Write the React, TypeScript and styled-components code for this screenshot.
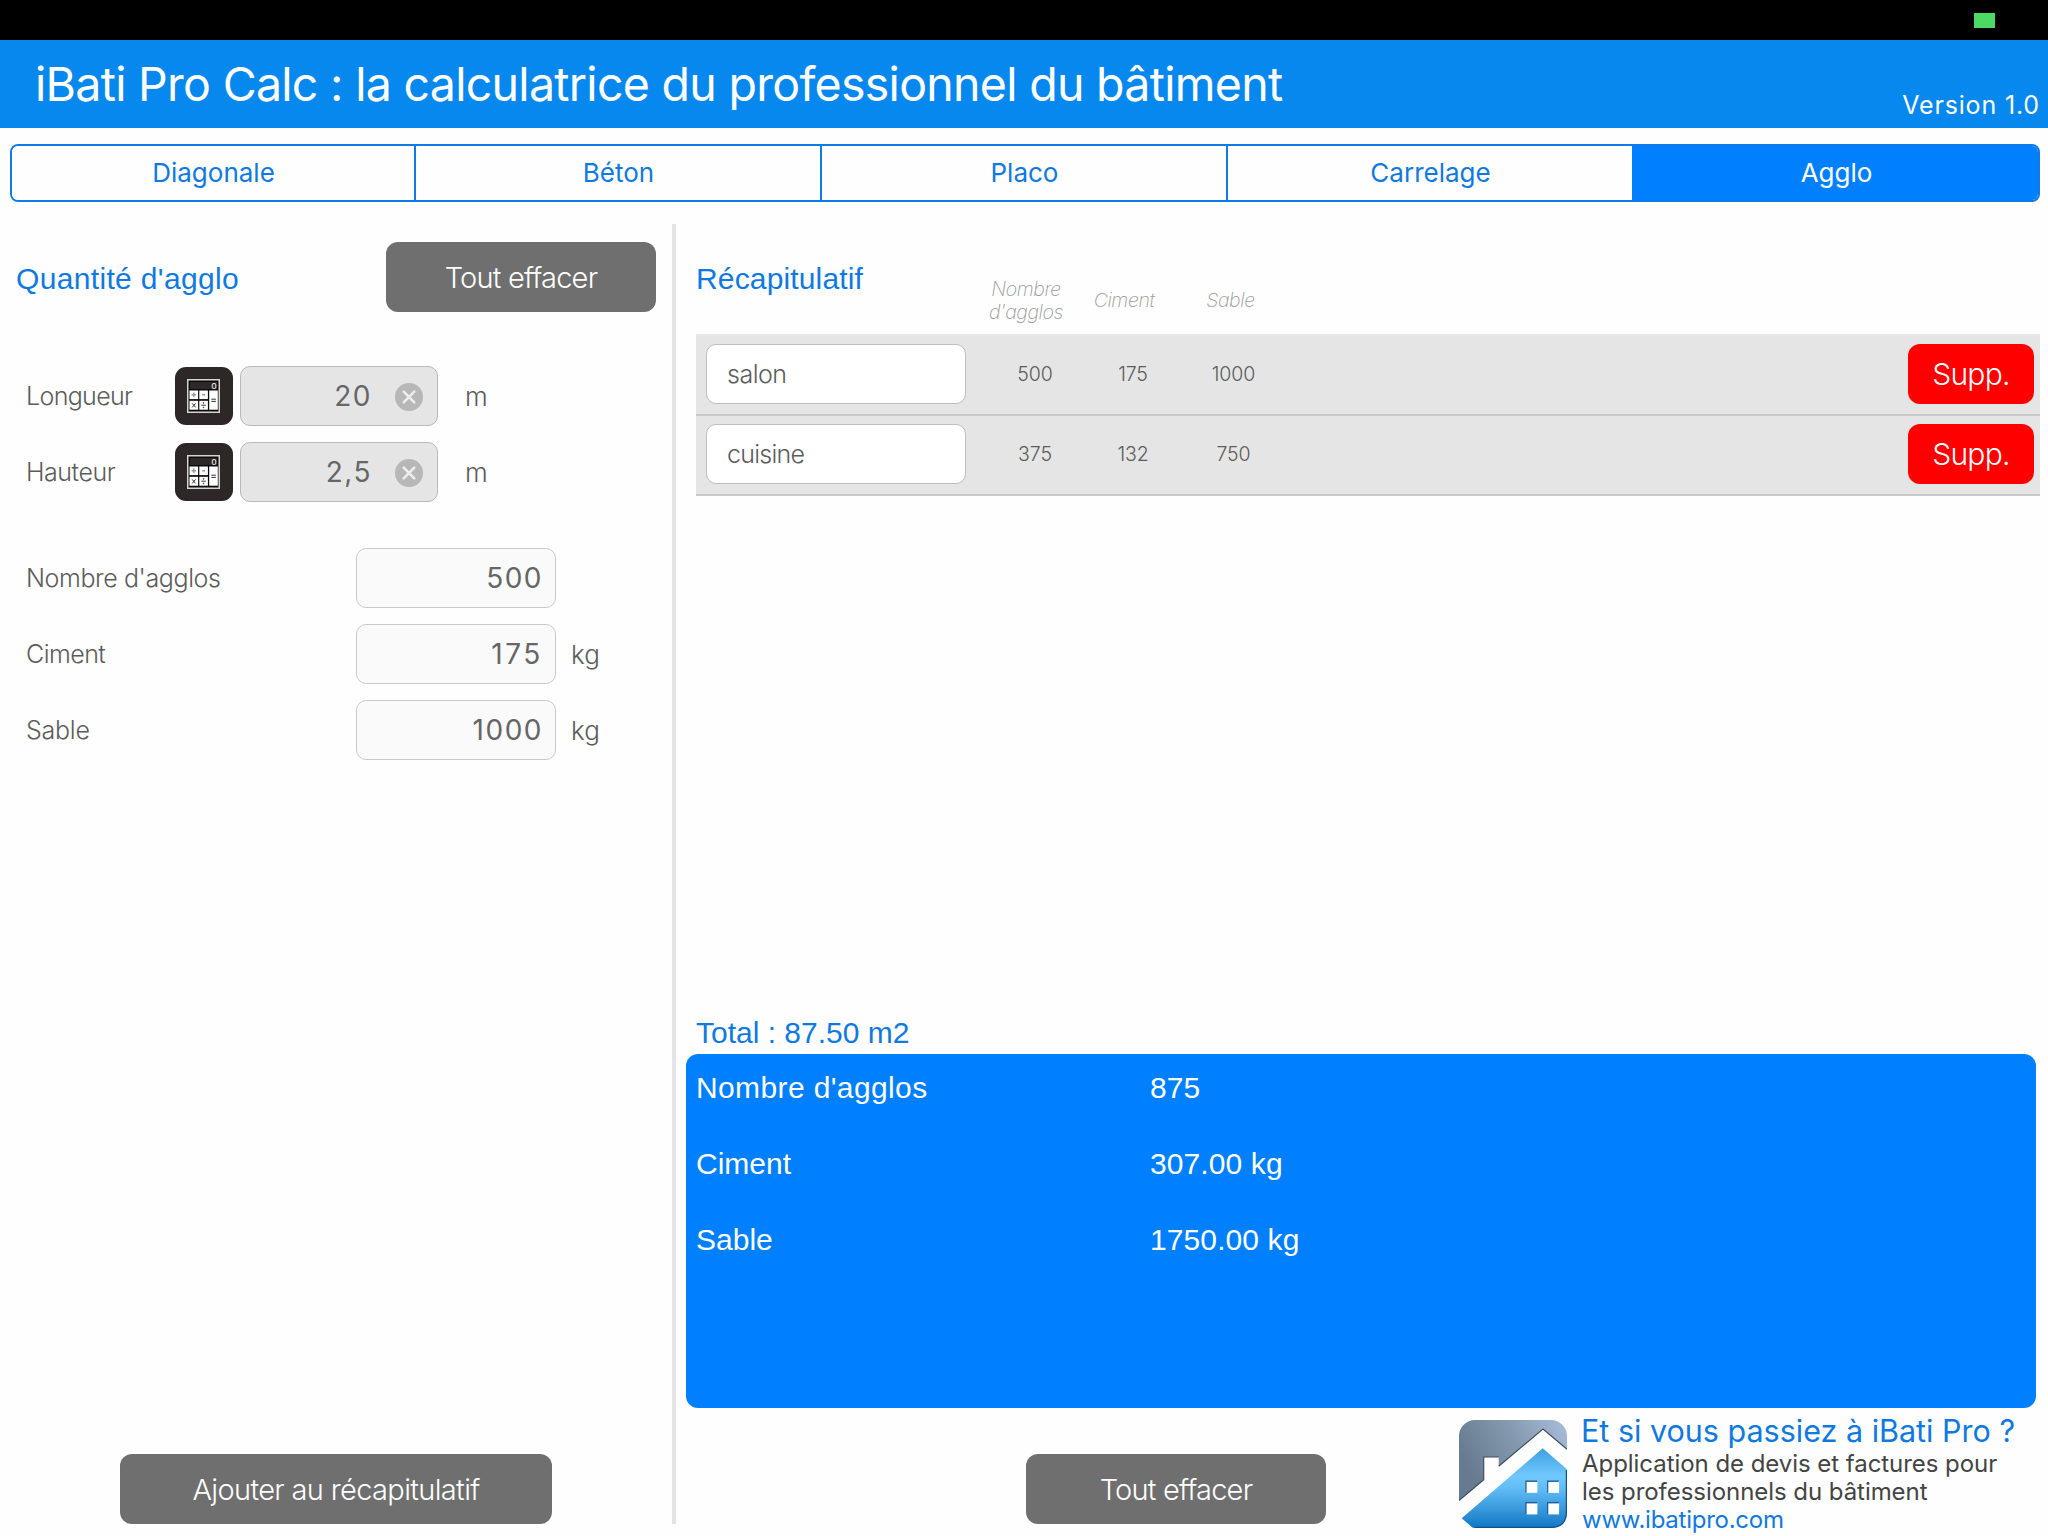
import React from "react";
import styled, { createGlobalStyle } from "styled-components";

const SANS = `"Liberation Sans", Arial, sans-serif`;
const UI = `Inter, "Liberation Sans", sans-serif`;
const BLUE = "#007fff";
const LINK = "#1079e0";

const GlobalStyle = createGlobalStyle`
  *, *::before, *::after { box-sizing: border-box; }
  body { margin: 0; background: #fefefe; }
  button { border: 0; padding: 0; margin: 0; }
`;

const Page = styled.div`
  width: 2048px;
  height: 1536px;
  display: flex;
  flex-direction: column;
  overflow: hidden;
  background: #fefefe;
  font-family: ${UI};
  white-space: nowrap;
`;

const StatusBar = styled.div`
  height: 40px;
  background: #000;
  display: flex;
  justify-content: flex-end;
  padding: 13px 53px 0 0;
`;

const Battery = styled.div`
  width: 21px;
  height: 15px;
  background: #4cd964;
`;

const Header = styled.header`
  height: 88px;
  background: #0788ee;
  color: #fff;
  display: flex;
  justify-content: space-between;
  padding: 0 8px 0 35px;
`;

const Title = styled.h1`
  margin: 0;
  font-size: 46.5px;
  font-weight: 400;
  line-height: 88px;
  letter-spacing: -0.71px;
`;

const Version = styled.span`
  margin-top: 42px;
  font-size: 25px;
  font-weight: 400;
  line-height: 46px;
  letter-spacing: 0.85px;
`;

const Tabs = styled.nav`
  flex: none;
  display: grid;
  grid-template-columns: 404px 406px 406px 406px 1fr;
  height: 58px;
  margin: 16px 8px 22px 10px;
  border: 2px solid #0f7be6;
  border-radius: 8px;
  overflow: hidden;
`;

const Tab = styled.button<{ $active?: boolean }>`
  padding-left: 1px;
  border-right: ${(p) => (p.$active ? "0" : "2px solid #0f7be6")};
  background: ${(p) => (p.$active ? BLUE : "#fefefe")};
  color: ${(p) => (p.$active ? "#fff" : LINK)};
  font: 400 26px/54px ${UI};
  outline: ${(p) => (p.$active ? `2px solid ${BLUE}` : "none")};
`;

const Main = styled.main`
  display: flex;
  height: 1312px;
`;

const Left = styled.section`
  width: 672px;
  height: 1300px;
  display: flex;
  flex-direction: column;
  padding-top: 18px;
`;

const Divider = styled.div`
  width: 4px;
  height: 1300px;
  background: #e4e4e4;
`;

const Right = styled.section`
  flex: 1;
  display: flex;
  flex-direction: column;
  height: 1312px;
`;

const LeftHead = styled.div`
  display: flex;
  justify-content: space-between;
  height: 70px;
  padding: 0 16px;
  margin-bottom: 54px;
`;

const Heading = styled.h2<{ $ls?: number }>`
  margin: 0;
  font: 400 30px/74px ${SANS};
  letter-spacing: ${(p) => p.$ls ?? 0}px;
  color: ${LINK};
`;

const GreyButton = styled.button<{ $w: number }>`
  width: ${(p) => p.$w}px;
  height: 70px;
  border-radius: 12px;
  background: #6f6f6f;
  color: #fff;
  font: 300 29px/71px ${UI};
  letter-spacing: -0.8px;
`;

const Form = styled.div`
  display: flex;
  flex-direction: column;
  gap: 16px;
  margin-bottom: 46px;
  padding-left: 26px;
`;

const Field = styled.div`
  display: flex;
  align-items: center;
  height: 60px;
`;

const Label = styled.label<{ $w: number; $ls: number }>`
  width: ${(p) => p.$w}px;
  font-size: 25px;
  font-weight: 300;
  letter-spacing: ${(p) => p.$ls}px;
  color: #5c5c5c;
`;

const Box = styled.div<{ $out?: boolean; $ls?: number }>`
  width: ${(p) => (p.$out ? 200 : 198)}px;
  height: 60px;
  display: flex;
  align-items: center;
  justify-content: flex-end;
  padding-right: ${(p) => (p.$out ? 12 : 14)}px;
  border: 1px solid ${(p) => (p.$out ? "#c9c9c9" : "#b9b9b9")};
  border-radius: 10px;
  background: ${(p) => (p.$out ? "#fafafa" : "#e5e5e5")};
  color: #666;
  font-size: 28px;
  line-height: 56px;
  padding-bottom: 1px;
  letter-spacing: ${(p) => p.$ls ?? 1.5}px;
`;

const Unit = styled.span<{ $gap: number }>`
  margin-left: ${(p) => p.$gap}px;
  font-size: 26px;
  font-weight: 300;
  color: #5c5c5c;
`;

const CalcSvg = styled.svg`
  width: 58px;
  height: 58px;
  margin-right: 7px;
`;

const ClearSvg = styled.svg`
  width: 28px;
  height: 28px;
  margin: 2px 0 0 23px;
`;

const AddButton = styled(GreyButton)`
  margin: auto 0 0 120px;
  letter-spacing: -0.65px;
`;

const RecapHead = styled.div`
  height: 110px;
  display: flex;
  padding-left: 20px;
`;

const RecapTitle = styled(Heading)`
  width: 281px;
  line-height: 110px;
`;

const ColumnName = styled.div<{ $w: number; $top?: number }>`
  width: ${(p) => p.$w}px;
  height: 48px;
  margin-top: ${(p) => p.$top ?? 52}px;
  display: flex;
  align-items: center;
  justify-content: center;
  text-align: center;
  white-space: pre-line;
  font-size: 19.5px;
  font-style: italic;
  font-weight: 250;
  line-height: 23px;
  letter-spacing: -0.4px;
  color: #999;
`;

const RecapList = styled.div`
  margin: 0 8px 0 20px;
  padding-top: 2px;
  background: #e5e5e5;
`;

const RecapRow = styled.div`
  height: 80px;
  display: flex;
  align-items: flex-start;
  padding: 8px 6px 0 10px;
  border-bottom: 2px solid #c9c9c9;
`;

const NameInput = styled.div<{ $ls: number }>`
  width: 260px;
  height: 60px;
  margin-right: 20px;
  padding-left: 20px;
  border: 1px solid #bdbdbd;
  border-radius: 10px;
  background: #fff;
  color: #5c5c5c;
  font-size: 25px;
  font-weight: 300;
  line-height: 58px;
  letter-spacing: ${(p) => p.$ls}px;
`;

const Cell = styled.div<{ $w: number }>`
  width: ${(p) => p.$w}px;
  text-align: center;
  font-size: 19.5px;
  font-weight: 300;
  line-height: 61px;
  letter-spacing: -0.1px;
  color: #5c5c5c;
`;

const DeleteButton = styled.button`
  width: 126px;
  height: 60px;
  margin-left: auto;
  border-radius: 12px;
  background: #f00;
  color: #fff;
  font: 300 30px/61px ${UI};
  letter-spacing: -0.7px;
`;

const Total = styled.div`
  margin: auto 0 0 20px;
  padding-top: 1px;
  font: 400 30px/43px ${SANS};
  color: ${LINK};
`;

const Summary = styled.div`
  width: 1350px;
  height: 354px;
  margin-left: 10px;
  padding-left: 10px;
  display: grid;
  grid-template-columns: 454px 1fr;
  grid-auto-rows: 76px;
  border-radius: 12px;
  background: ${BLUE};
  color: #fff;
  font: 400 30px/68px ${SANS};
`;

const Stat = styled.span<{ $ls?: number }>`
  letter-spacing: ${(p) => p.$ls ?? 0}px;
`;

const Footer = styled.footer`
  height: 128px;
  display: flex;
  align-items: flex-start;
`;

const ClearAll = styled(GreyButton)`
  margin: 46px 133px 0 350px;
`;

const LogoSvg = styled.svg`
  width: 108px;
  height: 108px;
  margin: 12px 14px 0 0;
`;

const Promo = styled.div`
  padding-top: 4px;
  font-size: 24px;
  line-height: 27.8px;
  color: #444;
`;

const PromoTitle = styled.div`
  font-size: 30.5px;
  font-weight: 400;
  line-height: 38px;
  color: ${LINK};
`;

const PromoLine = styled.div<{ $link?: boolean }>`
  padding-left: 1px;
  letter-spacing: ${(p) => (p.$link ? -0.25 : -0.05)}px;
  color: ${(p) => (p.$link ? LINK : "#444")};
`;

const CalcIcon = () => (
  <CalcSvg viewBox="0 0 58 58">
    <rect width="58" height="58" rx="11" fill="#2e2728" />
    <rect x="12.75" y="12.75" width="31.5" height="32.5" fill="#0c0a0a" stroke="#d6d4d4" strokeWidth="1.5" />
    <rect x="15" y="15" width="27" height="7" fill="#2e2728" />
    <text x="36.5" y="21.6" fontSize="9" fontFamily="Liberation Sans" fill="#fff">0</text>
    <g fill="#fff">
      <rect x="14.5" y="23.5" width="8.6" height="8.6" />
      <rect x="24.3" y="23.5" width="8.6" height="8.6" />
      <rect x="34.2" y="23.5" width="8.6" height="19.2" />
      <rect x="14.5" y="33.8" width="8.6" height="8.9" />
      <rect x="24.3" y="33.8" width="8.6" height="8.9" />
    </g>
    <g stroke="#999" strokeWidth="1.4">
      <path d="M16.6 27.8h4.4M18.8 25.6v4.4M27.2 27.8h2.8" />
    </g>
    <g stroke="#333" strokeWidth="1" fill="#333">
      <path d="M17.2 36.4l3.4 4M20.6 36.4l-3.4 4M26.4 38.2h4.4M36.3 32.2h4.6M36.3 34.4h4.6" />
      <circle cx="28.6" cy="35.9" r="0.35" />
      <circle cx="28.6" cy="40.5" r="0.35" />
    </g>
  </CalcSvg>
);

const ClearIcon = () => (
  <ClearSvg viewBox="0 0 28 28">
    <circle cx="14" cy="14" r="14" fill="#b7b7b7" />
    <path d="M8.7 8.7l10.6 10.6M19.3 8.7L8.7 19.3" stroke="#eee" strokeWidth="2.6" strokeLinecap="round" />
  </ClearSvg>
);

const WINDOWS = [
  [67, 61.5],
  [88.7, 61.5],
  [67, 83],
  [88.7, 83],
];

const Logo = () => (
  <LogoSvg viewBox="0 0 108 108">
    <defs>
      <linearGradient id="sky" x1="0" y1="0.4" x2="1" y2="0">
        <stop offset="0" stopColor="#667b90" />
        <stop offset="0.5" stopColor="#8498ae" />
        <stop offset="1" stopColor="#a9bedd" />
      </linearGradient>
      <linearGradient id="house" x1="0" y1="28" x2="0" y2="108" gradientUnits="userSpaceOnUse">
        <stop offset="0" stopColor="#3f9fe0" />
        <stop offset="0.35" stopColor="#70c8fd" />
        <stop offset="0.5" stopColor="#62bdf6" />
        <stop offset="1" stopColor="#1177c4" />
      </linearGradient>
      <clipPath id="tile">
        <rect width="108" height="108" rx="16" />
      </clipPath>
    </defs>
    <g clipPath="url(#tile)">
      <path d="M0 0H108V29.3L84 9L39.7 46.3V37H24.7V59.7L0 80.5Z" fill="url(#sky)" />
      <path d="M108 29.3L84 9L39.7 46.3M39.7 37H24.7V59.7L0 80.5" fill="none" stroke="#3d4f63" strokeWidth="1.2" />
      <path d="M83.7 28.3L108 49.3V108H14L2.7 98.3Z" fill="url(#house)" />
    </g>
    <path d="M107.4 50V92Q107.4 107.4 92 107.4H16" fill="none" stroke="#14508a" strokeWidth="1.2" />
    {WINDOWS.map(([x, y]) => (
      <g key={`${x}-${y}`}>
        <rect x={x - 0.6} y={y - 1} width="11.6" height="12" fill="#1f5c94" />
        <rect x={x + 0.6} y={y + 0.4} width="10.8" height="11" fill="#fff" />
      </g>
    ))}
  </LogoSvg>
);

const TABS = ["Diagonale", "Béton", "Placo", "Carrelage", "Agglo"];

const INPUTS = [
  { label: "Longueur", value: "20", ls: -0.65 },
  { label: "Hauteur", value: "2,5", ls: -0.45 },
];

const OUTPUTS = [
  { label: "Nombre d'agglos", value: "500", unit: "", ls: -0.4, valueLs: 1.5 },
  { label: "Ciment", value: "175", unit: "kg", ls: -0.55, valueLs: 2.6 },
  { label: "Sable", value: "1000", unit: "kg", ls: -0.25, valueLs: 1.5 },
];

const RECAP = [
  { name: "salon", ls: -0.5, cells: ["500", "175", "1000"] },
  { name: "cuisine", ls: -0.75, cells: ["375", "132", "750"] },
];

const CELL_WIDTHS = [98, 98, 103];

const STATS = [
  { label: "Nombre d'agglos", ls: 0.38, value: "875" },
  { label: "Ciment", ls: 0, value: "307.00 kg" },
  { label: "Sable", ls: 0, value: "1750.00 kg" },
];

export default function App() {
  return (
    <Page>
      <GlobalStyle />
      <StatusBar>
        <Battery />
      </StatusBar>
      <Header>
        <Title>iBati Pro Calc : la calculatrice du professionnel du bâtiment</Title>
        <Version>Version 1.0</Version>
      </Header>
      <Tabs>
        {TABS.map((t) => (
          <Tab key={t} $active={t === "Agglo"}>{t}</Tab>
        ))}
      </Tabs>
      <Main>
        <Left>
          <LeftHead>
            <Heading $ls={0.34}>Quantité d'agglo</Heading>
            <GreyButton $w={270}>Tout effacer</GreyButton>
          </LeftHead>
          <Form>
            {INPUTS.map((f) => (
              <Field key={f.label}>
                <Label $w={149} $ls={f.ls}>{f.label}</Label>
                <CalcIcon />
                <Box>
                  {f.value}
                  <ClearIcon />
                </Box>
                <Unit $gap={27}>m</Unit>
              </Field>
            ))}
          </Form>
          <Form>
            {OUTPUTS.map((f) => (
              <Field key={f.label}>
                <Label $w={330} $ls={f.ls}>{f.label}</Label>
                <Box $out $ls={f.valueLs}>{f.value}</Box>
                <Unit $gap={15}>{f.unit}</Unit>
              </Field>
            ))}
          </Form>
          <AddButton $w={432}>Ajouter au récapitulatif</AddButton>
        </Left>
        <Divider />
        <Right>
          <RecapHead>
            <RecapTitle $ls={0.15}>Récapitulatif</RecapTitle>
            <ColumnName $w={98} $top={53}>{"Nombre\nd'agglos"}</ColumnName>
            <ColumnName $w={98}>Ciment</ColumnName>
            <ColumnName $w={115}>Sable</ColumnName>
          </RecapHead>
          <RecapList>
            {RECAP.map((r) => (
              <RecapRow key={r.name}>
                <NameInput $ls={r.ls}>{r.name}</NameInput>
                {r.cells.map((c, i) => (
                  <Cell key={i} $w={CELL_WIDTHS[i]}>{c}</Cell>
                ))}
                <DeleteButton>Supp.</DeleteButton>
              </RecapRow>
            ))}
          </RecapList>
          <Total>Total : 87.50 m2</Total>
          <Summary>
            {STATS.map((s) => (
              <React.Fragment key={s.label}>
                <Stat $ls={s.ls}>{s.label}</Stat>
                <Stat $ls={0.1}>{s.value}</Stat>
              </React.Fragment>
            ))}
          </Summary>
          <Footer>
            <ClearAll $w={300}>Tout effacer</ClearAll>
            <Logo />
            <Promo>
              <PromoTitle>Et si vous passiez à iBati Pro ?</PromoTitle>
              <PromoLine>Application de devis et factures pour</PromoLine>
              <PromoLine>les professionnels du bâtiment</PromoLine>
              <PromoLine $link>www.ibatipro.com</PromoLine>
            </Promo>
          </Footer>
        </Right>
      </Main>
    </Page>
  );
}
